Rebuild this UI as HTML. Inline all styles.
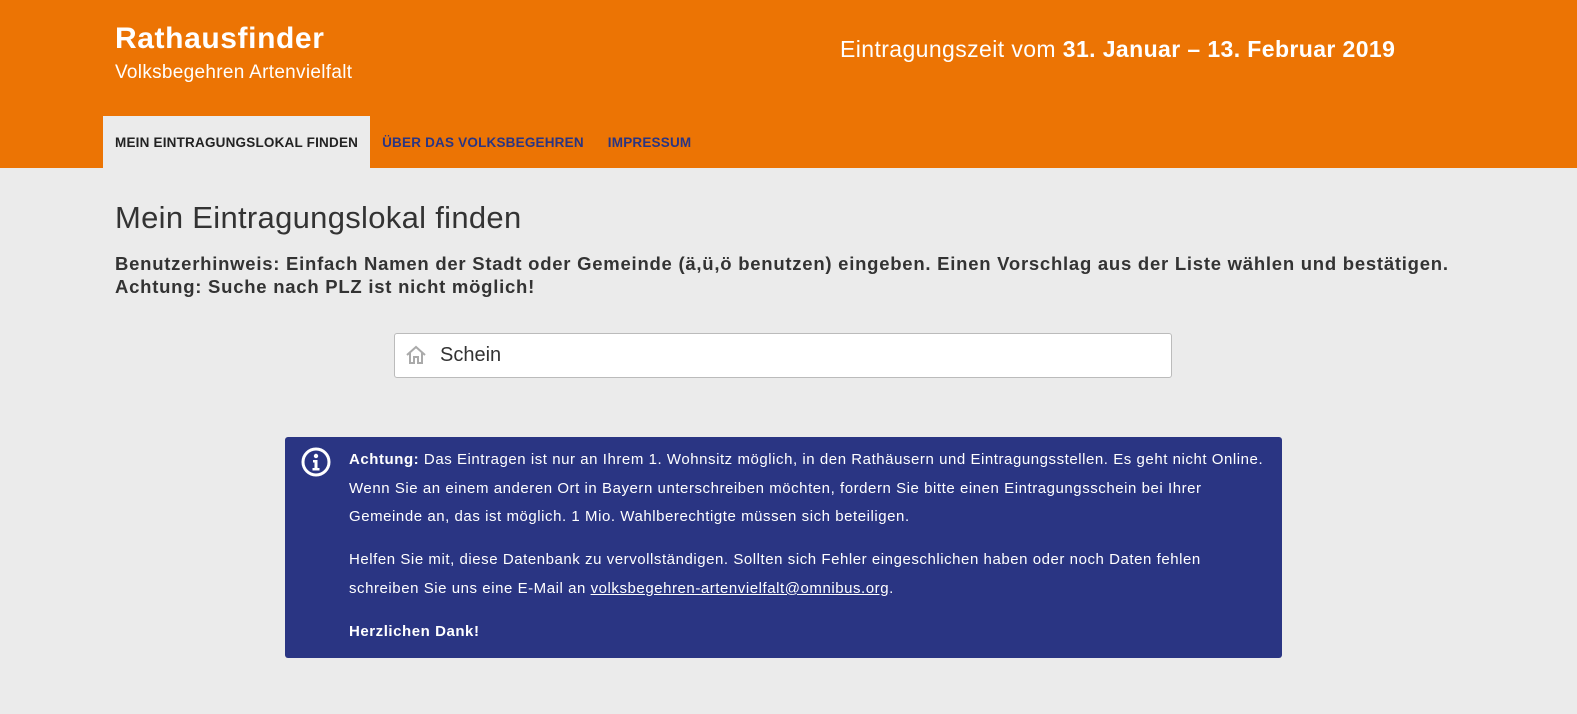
<!DOCTYPE html>
<html><head><meta charset="utf-8"><style>
*{margin:0;padding:0;box-sizing:border-box}
body{width:1577px;height:714px;background:#ebebeb;font-family:"Liberation Sans",sans-serif;color:#333;overflow:hidden}
.hdr{height:168px;background:#ec7404;position:relative}
.t1{position:absolute;left:115px;top:22px;font-size:30px;font-weight:bold;color:#fff;letter-spacing:0.6px}
.t2{position:absolute;left:115px;top:62px;font-size:19px;color:#fff;letter-spacing:0.3px}
.t3{position:absolute;left:840px;top:36px;font-size:23px;color:#fff;letter-spacing:0.4px}
.nav{position:absolute;left:103px;top:116px;height:52px;display:flex;font-size:13.5px;font-weight:bold;letter-spacing:0.2px}
.nav div{padding:0 12px;line-height:54px;color:#2a3583}
.nav .a{background:#ebebeb;color:#222}
h1{position:absolute;left:115px;top:200px;font-size:31px;font-weight:normal;color:#333;letter-spacing:0.3px}
.hint{position:absolute;left:115px;top:252px;font-size:18.5px;font-weight:bold;line-height:23px;color:#333;letter-spacing:0.75px;white-space:nowrap}
.inp{position:absolute;left:394px;top:333px;width:778px;height:45px;background:#fff;border:1px solid #bbb;border-radius:3px}
.inp span{position:absolute;left:45px;top:10px;font-size:20px;color:#333}
.box{position:absolute;left:285px;top:437px;width:997px;height:221px;background:#2a3583;border-radius:3px;color:#fff;font-size:15px;line-height:28.7px;padding:9px 14px 0 64px;letter-spacing:0.55px}
.box p{margin-bottom:14px}
a{color:#fff;text-decoration:underline}
</style></head><body>
<div class="hdr">
<div class="t1">Rathausfinder</div>
<div class="t2">Volksbegehren Artenvielfalt</div>
<div class="t3">Eintragungszeit vom <b>31. Januar – 13. Februar 2019</b></div>
<div class="nav"><div class="a">MEIN EINTRAGUNGSLOKAL FINDEN</div><div>ÜBER DAS VOLKSBEGEHREN</div><div>IMPRESSUM</div></div>
</div>
<h1>Mein Eintragungslokal finden</h1>
<div class="hint">Benutzerhinweis: Einfach Namen der Stadt oder Gemeinde (ä,ü,ö benutzen) eingeben. Einen Vorschlag aus der Liste wählen und bestätigen.<br>Achtung: Suche nach PLZ ist nicht möglich!</div>
<div class="inp"><svg style="position:absolute;left:10px;top:11px" width="22" height="20" viewBox="0 0 22 20" fill="none" stroke="#aaa" stroke-width="2"><path d="M2 10 L11 2 L20 10 M5 8 V18 H9 V12 H13 V18 H17 V8"/></svg><span>Schein</span></div>
<div class="box">
<svg style="position:absolute;left:16px;top:10px" width="30" height="30" viewBox="0 0 30 30"><circle cx="15" cy="15" r="13" fill="none" stroke="#fff" stroke-width="3"/><circle cx="15" cy="9" r="2.2" fill="#fff"/><path d="M12 13h4.5v8h2v2.5h-7V21h2v-5.5H12z" fill="#fff"/></svg>
<p><b>Achtung:</b> Das Eintragen ist nur an Ihrem 1. Wohnsitz möglich, in den Rathäusern und Eintragungsstellen. Es geht nicht Online. Wenn Sie an einem anderen Ort in Bayern unterschreiben möchten, fordern Sie bitte einen Eintragungsschein bei Ihrer Gemeinde an, das ist möglich. 1 Mio. Wahlberechtigte müssen sich beteiligen.</p>
<p>Helfen Sie mit, diese Datenbank zu vervollständigen. Sollten sich Fehler eingeschlichen haben oder noch Daten fehlen schreiben Sie uns eine E-Mail an <a>volksbegehren-artenvielfalt@omnibus.org</a>.</p>
<p><b>Herzlichen Dank!</b></p>
</div>
</body></html>
